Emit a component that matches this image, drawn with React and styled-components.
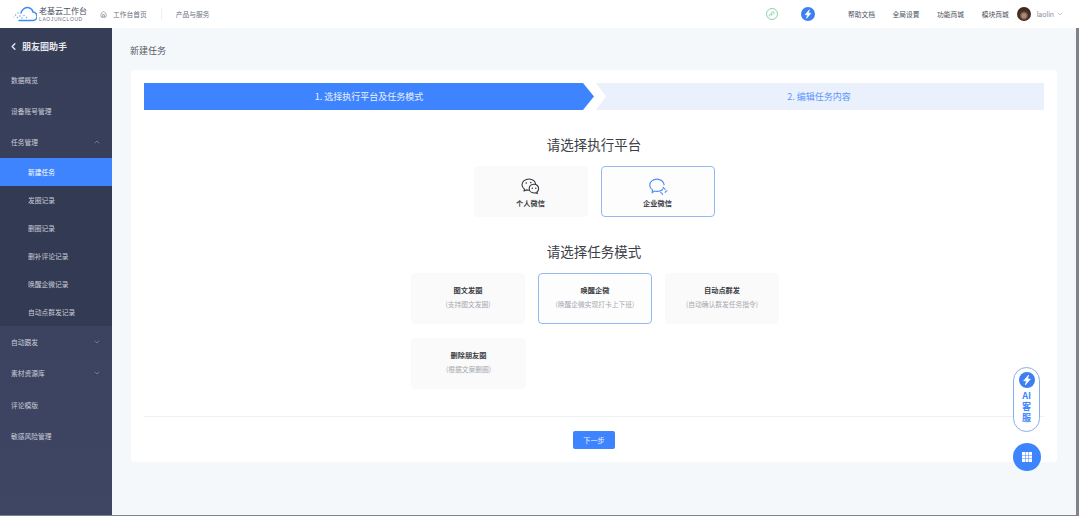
import React from 'react';
import styled, { createGlobalStyle } from 'styled-components';
import { Home, ChevronLeft, ChevronDown, ChevronUp } from 'lucide-react';

const GlobalStyle = createGlobalStyle`
  html, body {
    margin: 0;
    padding: 0;
    background: #fff;
    font-family: "Noto Sans CJK SC", "Noto Sans", sans-serif;
    -webkit-font-smoothing: antialiased;
  }
  * { box-sizing: border-box; }
`;

const Page = styled.div`
  width: 1080px;
  height: 517px;
  overflow: hidden;
  position: relative;
  display: flex;
  flex-direction: column;
  background: #fff;
  padding: 0 1px 1px 0;
`;

const Topbar = styled.header`
  height: 28px;
  flex: none;
  background: #fff;
  display: flex;
  align-items: center;
  padding: 0 12px 0 13px;
  color: #555b66;
`;

const Logo = styled.div`
  display: flex;
  align-items: center;
  width: 87px;
  gap: 2px;
`;

const LogoText = styled.div`
  display: flex;
  flex-direction: column;
  line-height: 1;
`;

const LogoName = styled.span`
  font-size: 8px;
  color: #4a5060;
  white-space: nowrap;
  line-height: 9px;
`;

const LogoSub = styled.span`
  font-size: 5px;
  letter-spacing: 0.6px;
  color: #6b7280;
  line-height: 6px;
  margin-top: 1px;
  font-family: "Liberation Sans", sans-serif;
`;

const NavLink = styled.span`
  font-size: 6.75px;
  white-space: nowrap;
  color: ${({ $muted }) => ($muted ? '#6c727c' : '#4a4f59')};
`;

const HomeLink = styled.div`
  display: flex;
  align-items: center;
  gap: 6px;
  color: #6c727c;
`;

const NavDivider = styled.span`
  width: 1px;
  height: 12px;
  background: #eef0f3;
  margin: 0 14px;
`;

const TopRight = styled.div`
  margin-left: auto;
  display: flex;
  align-items: center;
`;

const StatusIcons = styled.div`
  display: flex;
  align-items: center;
  gap: 23px;
  margin-right: 33px;
`;

const TopLinks = styled.div`
  display: flex;
  align-items: center;
  gap: 17.5px;
`;

const UserBox = styled.div`
  display: flex;
  align-items: center;
  margin-left: 8px;
  color: #8b9098;
  margin-right: 3px;
`;

const Avatar = styled.span`
  width: 14px;
  height: 14px;
  border-radius: 50%;
  margin-right: 6px;
  background: radial-gradient(circle at 50% 62%, #a98a78 0 18%, #4c3226 40%, #2a1d18 100%);
`;

const UserName = styled.span`
  font-family: "Inter", sans-serif;
  font-size: 7px;
  margin-right: 2px;
`;

const Body = styled.div`
  flex: 1;
  display: flex;
  min-height: 0;
  border-bottom: 1px solid #7d838c;
`;

const Sidebar = styled.aside`
  width: 112px;
  flex: none;
  background: linear-gradient(180deg, #363d57 0%, #3e4664 100%);
  color: #c9cdd8;
`;

const SideTitle = styled.div`
  height: 36px;
  display: flex;
  align-items: center;
  padding-left: 8px;
  gap: 3px;
  font-size: 9px;
  font-weight: 700;
  color: #e6e8ee;
`;

const MenuItem = styled.div`
  height: 31.4px;
  display: flex;
  align-items: center;
  justify-content: space-between;
  padding: 0 11px;
  font-size: 6.75px;
`;

const SubMenu = styled.div`
  background: #333a53;
`;

const SubItem = styled.div`
  height: 28px;
  display: flex;
  align-items: center;
  padding-left: 28px;
  font-size: 6.75px;
  color: ${({ $active }) => ($active ? '#fff' : '#c9cdd8')};
  background: ${({ $active }) => ($active ? '#3e84ff' : 'transparent')};
`;

const Main = styled.main`
  flex: 1;
  padding: 0 19px;
  display: flex;
  flex-direction: column;
  background: #f5f8fb;
  border-right: 3px solid #7d838c;
`;

const PageTitle = styled.h1`
  margin: 0 0 0 -1px;
  height: 42px;
  display: flex;
  align-items: center;
  padding: 2px 0 0;
  font-size: 9px;
  font-weight: 400;
  color: #555a63;
`;

const Card = styled.section`
  width: 926px;
  height: 392px;
  background: #fff;
  border-radius: 3px;
  padding: 13px;
  display: flex;
  flex-direction: column;
`;

const Steps = styled.div`
  display: flex;
  height: 27px;
  flex: none;
`;

const StepFirst = styled.div`
  width: 450px;
  background: #3e84ff;
  color: #e9f1ff;
  font-size: 9px;
  display: flex;
  align-items: center;
  justify-content: center;
  clip-path: polygon(0 0, 439px 0, 100% 50%, 439px 100%, 0 100%);
`;

const StepSecond = styled.div`
  width: 448px;
  margin-left: 2px;
  padding-right: 2px;
  background: #eaf1fd;
  color: #5a95ff;
  font-size: 9px;
  display: flex;
  align-items: center;
  justify-content: center;
  clip-path: polygon(0 0, 100% 0, 100% 100%, 0 100%, 10px 50%);
`;

const SectionTitle = styled.h2`
  margin: 24px 0 12px;
  height: 20px;
  line-height: 20px;
  text-align: center;
  font-size: 13.5px;
  font-weight: 400;
  color: #3d4047;
`;

const PlatformRow = styled.div`
  display: flex;
  justify-content: center;
  gap: 13px;
`;

const ModeGrid = styled.div`
  display: grid;
  grid-template-columns: repeat(3, 114px);
  grid-auto-rows: 51px;
  gap: 14px 13px;
  justify-content: center;
  justify-items: start;
  padding-left: 2px;
`;

const Option = styled.div`
  width: ${({ $width }) => $width || 114}px;
  height: 51px;
  background: ${({ $selected }) => ($selected ? '#fdfdfe' : '#fafafa')};
  border: 1px solid ${({ $selected }) => ($selected ? '#94b8ef' : '#fafafa')};
  border-radius: 4px;
  display: flex;
  flex-direction: column;
  align-items: center;
  justify-content: center;
`;

const IconSlot = styled.div`
  height: 19px;
  display: flex;
  align-items: center;
  justify-content: center;
  margin: 2px 0;
`;

const ModeText = styled.div`
  display: flex;
  flex-direction: column;
  align-items: center;
  margin-bottom: 4px;
`;

const OptionName = styled.span`
  font-size: 7.2px;
  font-weight: 700;
  line-height: 11px;
  color: #3a3d44;
`;

const OptionHint = styled.span`
  font-size: 6.75px;
  line-height: 10px;
  margin-top: 3px;
  color: #a4a8af;
  white-space: nowrap;
`;

const Footer = styled.div`
  margin-top: auto;
  border-top: 1px solid #eef0f3;
  height: 33px;
  padding-top: 14px;
  display: flex;
  justify-content: center;
  flex: none;
`;

const NextButton = styled.button`
  width: 42px;
  height: 18px;
  border: 0;
  border-radius: 2px;
  background: #3e84ff;
  color: #e9f1ff;
  font-family: inherit;
  font-size: 7.2px;
  padding: 0;
`;

const AiPill = styled.div`
  position: absolute;
  left: 1013px;
  top: 367px;
  width: 27px;
  height: 65px;
  border: 1px solid #86aef0;
  border-radius: 14px;
  background: #fff;
  display: flex;
  flex-direction: column;
  align-items: center;
  padding-top: 4px;
`;

const AiLabel = styled.span`
  font-size: 9px;
  font-weight: 700;
  line-height: 11px;
  margin-top: 2px;
  color: #3e84ff;
  width: 10px;
  text-align: center;
  word-break: break-all;
`;

const GridButton = styled.div`
  position: absolute;
  left: 1013px;
  top: 443px;
  width: 28px;
  height: 28px;
  border-radius: 50%;
  background: #3e84ff;
  display: flex;
  align-items: center;
  justify-content: center;
`;

const Bolt = ({ size = 14 }) => (
  <svg width={size} height={size} viewBox="0 0 24 24">
    <circle cx="12" cy="12" r="12" fill="#3e7ff0" />
    <path d="M14.5 4.5 7 13.2h4.2L9.5 19.5 17 10.6h-4.2z" fill="#fff" strokeLinejoin="round" stroke="#fff" strokeWidth="1" />
  </svg>
);

const MiniProgram = () => (
  <svg width="12" height="12" viewBox="0 0 24 24" fill="none" stroke="#6fc596" strokeWidth="1.6">
    <circle cx="12" cy="12" r="11" />
    <path d="M8 17.2c-1.8-.6-2-3.2-.5-4.2 1.6-1 3.6-.2 3.9 1.6V9.400c.3-1.800 2.300-2.600 3.900-1.600 1.500 1 1.300 3.600-.5 4.200" />
  </svg>
);

const CloudLogo = () => (
  <svg width="24" height="16" viewBox="0 0 48 32" fill="none">
    <path d="M12 29h27a8.500 8.500 0 0 0 1-17C38 3 27 0 20 7c-2 2-3.500 4-4 7" stroke="#3f8cf0" strokeWidth="3" strokeLinecap="round" />
    <g fill="#5aa5f2">
      <circle cx="5" cy="18" r="1.400" /><circle cx="10" cy="14" r="1.400" /><circle cx="14" cy="20" r="1.600" />
      <circle cx="9" cy="23" r="1.400" /><circle cx="18" cy="24" r="1.400" /><circle cx="22" cy="19" r="1.400" />
      <circle cx="2" cy="22" r="1" /><circle cx="27" cy="23" r="1.400" />
    </g>
  </svg>
);

const PersonalWechat = () => (
  <svg width="19" height="17" viewBox="0 0 19 17" fill="none" stroke="#33363d" strokeWidth="1.100" strokeLinejoin="round">
    <path d="M8 1C4.100 1 1 3.500 1 6.700c0 1.800 1 3.400 2.500 4.400L3 13l2.300-1.100c.8.200 1.600.3 2.400.3 3.900 0 7-2.400 7-5.500C14.700 3.500 11.900 1 8 1z" />
    <path d="M13 6.200c-2.700 0-4.800 2-4.800 4.400s2.100 4.400 4.800 4.400c.6 0 1.100-.1 1.700-.3l1.700.9-.4-1.600c1-.8 1.600-2 1.600-3.400 0-2.400-2-4.400-4.600-4.400z" fill="#fafafa" />
    <circle cx="5.300" cy="5" r=".8" fill="#33363d" stroke="none" />
    <circle cx="9.800" cy="4.500" r=".8" fill="#33363d" stroke="none" />
    <circle cx="11.300" cy="10.300" r=".7" fill="#33363d" stroke="none" />
    <circle cx="14.800" cy="10.300" r=".7" fill="#33363d" stroke="none" />
  </svg>
);

const EnterpriseWechat = () => (
  <svg width="20" height="19" viewBox="0 0 24 23" fill="none" stroke="#4f8df0" strokeWidth="1.400" strokeLinecap="round">
    <path d="M15.500 16.200c-1.400.8-3 1.200-4.800 1.200-1 0-2-.1-2.900-.4L5 18.800l.4-3.200C3.200 14.200 2 12.200 2 10 2 5.800 5.900 2.500 10.700 2.500c4.600 0 8.400 3 8.700 6.900" />
    <path d="M18.300 12.500c.5 1.300 1.300 2 2.500 2.300M23 16.600c-1.300.2-2 .9-2.300 2.100M17.500 21c-.3-1.200-1-1.900-2.300-2.200M15.200 16.700c1.200-.3 1.900-1 2.300-2.200" />
  </svg>
);

const GridIcon = () => (
  <svg width="10" height="10" viewBox="0 0 10 10" fill="#fff">
    {[0, 3.5, 7].flatMap((y) =>
      [0, 3.5, 7].map((x) => <rect key={`${x}-${y}`} x={x} y={y} width="3" height="3" />)
    )}
  </svg>
);

const subItems = ['新建任务', '发圈记录', '删圈记录', '删补评论记录', '唤醒企微记录', '自动点群发记录'];

const modes = [
  { name: '图文发圈', hint: '(支持图文发圈)' },
  { name: '唤醒企微', hint: '(唤醒企微实现打卡上下班)', selected: true },
  { name: '自动点群发', hint: '(自动确认群发任务指令)' },
  { name: '删除朋友圈', hint: '(根据文案删圈)', width: 115 },
];

export default function App() {
  return (
    <Page>
      <GlobalStyle />
      <Topbar>
        <Logo>
          <CloudLogo />
          <LogoText>
            <LogoName>老基云工作台</LogoName>
            <LogoSub>LAOJUNCLOUD</LogoSub>
          </LogoText>
        </Logo>
        <HomeLink>
          <Home size={7} />
          <NavLink $muted>工作台首页</NavLink>
        </HomeLink>
        <NavDivider />
        <NavLink $muted>产品与服务</NavLink>
        <TopRight>
          <StatusIcons>
            <MiniProgram />
            <Bolt />
          </StatusIcons>
          <TopLinks>
            <NavLink>帮助文档</NavLink>
            <NavLink>全局设置</NavLink>
            <NavLink>功能商城</NavLink>
            <NavLink>模块商城</NavLink>
          </TopLinks>
          <UserBox>
            <Avatar />
            <UserName>laolin</UserName>
            <ChevronDown size={8} strokeWidth={1.5} />
          </UserBox>
        </TopRight>
      </Topbar>
      <Body>
        <Sidebar>
          <SideTitle>
            <ChevronLeft size={11} strokeWidth={3} />
            朋友圈助手
          </SideTitle>
          <MenuItem>数据概览</MenuItem>
          <MenuItem>设备账号管理</MenuItem>
          <MenuItem>
            任务管理
            <ChevronUp size={8} strokeWidth={1.2} />
          </MenuItem>
          <SubMenu>
            {subItems.map((label, i) => (
              <SubItem key={label} $active={i === 0}>{label}</SubItem>
            ))}
          </SubMenu>
          <MenuItem>
            自动跟发
            <ChevronDown size={8} strokeWidth={1.2} />
          </MenuItem>
          <MenuItem>
            素材资源库
            <ChevronDown size={8} strokeWidth={1.2} />
          </MenuItem>
          <MenuItem>评论模版</MenuItem>
          <MenuItem>敏感风险管理</MenuItem>
        </Sidebar>
        <Main>
          <PageTitle>新建任务</PageTitle>
          <Card>
            <Steps>
              <StepFirst>1. 选择执行平台及任务模式</StepFirst>
              <StepSecond>2. 编辑任务内容</StepSecond>
            </Steps>
            <SectionTitle>请选择执行平台</SectionTitle>
            <PlatformRow>
              <Option>
                <IconSlot><PersonalWechat /></IconSlot>
                <OptionName>个人微信</OptionName>
              </Option>
              <Option $selected>
                <IconSlot><EnterpriseWechat /></IconSlot>
                <OptionName>企业微信</OptionName>
              </Option>
            </PlatformRow>
            <SectionTitle>请选择任务模式</SectionTitle>
            <ModeGrid>
              {modes.map((m) => (
                <Option key={m.name} $selected={m.selected} $width={m.width}>
                  <ModeText>
                    <OptionName>{m.name}</OptionName>
                    <OptionHint>{m.hint}</OptionHint>
                  </ModeText>
                </Option>
              ))}
            </ModeGrid>
            <Footer>
              <NextButton>下一步</NextButton>
            </Footer>
          </Card>
        </Main>
      </Body>
      <AiPill>
        <Bolt size={16} />
        <AiLabel>AI客服</AiLabel>
      </AiPill>
      <GridButton>
        <GridIcon />
      </GridButton>
    </Page>
  );
}
